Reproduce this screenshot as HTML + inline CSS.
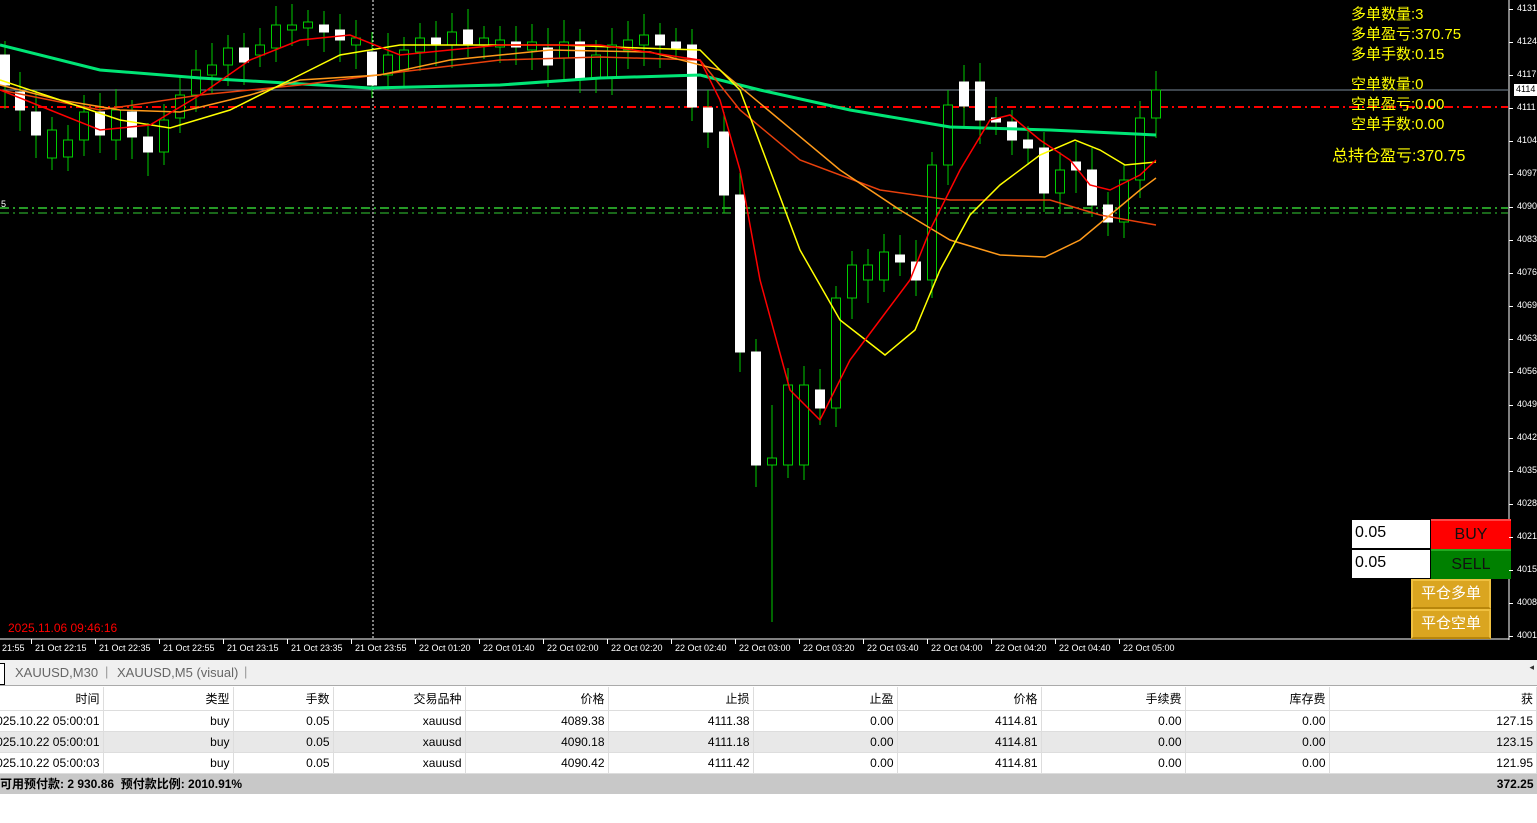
<!DOCTYPE html>
<html><head><meta charset="utf-8"><style>
*{margin:0;padding:0;box-sizing:border-box}
body{width:1537px;height:823px;background:#fff;position:relative;overflow:hidden;font-family:"Liberation Sans","Noto Sans CJK SC",sans-serif}
.chart{position:absolute;left:0;top:0;width:1537px;height:660px;background:#000}
.ax{position:absolute;left:1517px;font-size:9px;color:#fff;font-family:"Liberation Sans",sans-serif}
.info{position:absolute;color:#ff0;font-size:15px;font-family:"Liberation Sans","WenQuanYi Zen Hei",sans-serif}
.tabs{position:absolute;top:660px;left:0;width:1537px;height:26px;background:#f0f0f0;border-bottom:1px solid #aaa;font-size:13px;color:#666}
table{position:absolute;top:687px;left:0;border-collapse:collapse;font-size:12px;width:1537px;table-layout:fixed}
td{height:21px;text-align:right;padding-right:3px;border-right:1px solid #ddd;border-bottom:1px solid #ddd;white-space:nowrap;color:#000;overflow:hidden}
tr.h td{height:23px}
tr.g td{background:#e8e8e8}
tr.f td{background:#c8c8c8;font-weight:bold;border:none;height:21px;overflow:visible}
.dt{direction:rtl;overflow:hidden;white-space:nowrap}
.dt span{direction:ltr;unicode-bidi:embed}
</style></head><body>
<div class="chart">
<svg width="1537" height="660" style="position:absolute;left:0;top:0">
<line x1="0" y1="90" x2="1508" y2="90" stroke="#7a8a9a" stroke-width="1"/>
<line x1="0" y1="107" x2="1508" y2="107" stroke="#f00" stroke-width="2" stroke-dasharray="9,4,2,4"/>
<line x1="0" y1="208" x2="1508" y2="208" stroke="#3c3" stroke-width="1.5" stroke-dasharray="9,4,2,4"/>
<line x1="0" y1="213" x2="1508" y2="213" stroke="#3c3" stroke-width="1" stroke-dasharray="9,4,2,4"/>
<line x1="373" y1="0" x2="373" y2="638" stroke="#fff" stroke-width="1" stroke-dasharray="2,2"/>
<line x1="1509" y1="0" x2="1509" y2="640" stroke="#fff"/>
<line x1="0" y1="639" x2="1509" y2="639" stroke="#fff"/>
<g id="c" stroke-width="1"></g>
<polyline fill="none" stroke="#00e676" stroke-width="3" points="0,45 100,70 200,78 370,88 500,85 600,78 700,75 760,90 850,110 950,127 1050,130 1156,135"/>
<polyline fill="none" stroke="#e8400c" stroke-width="1.5" points="0,90 100,110 200,95 300,85 400,72 500,60 600,57 700,60 740,110 800,160 880,190 950,200 1050,200 1100,215 1156,225"/>
<polyline fill="none" stroke="#ff9a1a" stroke-width="1.5" points="0,85 60,100 120,110 180,112 250,95 300,80 380,75 450,60 550,50 650,52 720,70 780,120 840,170 900,210 950,240 1000,255 1045,257 1080,240 1110,215 1140,190 1156,178"/>
<polyline fill="none" stroke="#ffff00" stroke-width="1.5" points="0,80 60,100 120,120 170,128 230,110 290,80 340,55 400,45 470,45 560,45 640,48 700,50 740,90 770,170 800,250 840,320 885,355 915,330 940,270 970,215 1000,185 1040,155 1075,140 1100,150 1125,165 1156,162"/>
<polyline fill="none" stroke="#f00" stroke-width="1.5" points="0,90 50,110 100,130 150,125 200,95 250,60 300,40 350,35 400,55 500,45 600,45 700,60 720,100 740,170 760,280 790,390 820,420 850,360 880,320 910,280 930,230 960,170 990,120 1010,115 1040,140 1070,160 1090,185 1110,190 1140,175 1156,160"/>
<text x="1" y="207" fill="#fff" font-size="9" font-family="Liberation Sans">5</text>
</svg>
<div class="info" style="left:1351px;top:3px">多单数量:3</div>
<div class="info" style="left:1351px;top:23px">多单盈亏:370.75</div>
<div class="info" style="left:1351px;top:43px">多单手数:0.15</div>
<div class="info" style="left:1351px;top:73px">空单数量:0</div>
<div class="info" style="left:1351px;top:93px">空单盈亏:0.00</div>
<div class="info" style="left:1351px;top:113px">空单手数:0.00</div>
<div class="info" style="left:1332px;top:142px;font-size:16px">总持仓盈亏:370.75</div>
<div style="position:absolute;left:8px;top:621px;color:#f00;font-size:12px">2025.11.06 09:46:16</div>
<div style="position:absolute;left:1352px;top:520px;width:78px;height:28px;background:#fff;font-size:16px;padding:4px 3px;color:#000">0.05</div>
<div style="position:absolute;left:1352px;top:550px;width:78px;height:28px;background:#fff;font-size:16px;padding:4px 3px;color:#000">0.05</div>
<div style="position:absolute;left:1431px;top:519px;width:80px;height:30px;background:#f00;border-top:2px solid #f44;font-size:16px;text-align:center;line-height:28px;color:#111">BUY</div>
<div style="position:absolute;left:1431px;top:549px;width:80px;height:30px;background:#008000;border-top:2px solid #2a2;font-size:16px;text-align:center;line-height:28px;color:#111">SELL</div>
<div style="position:absolute;left:1411px;top:579px;width:80px;height:30px;background:#daa520;border:2px solid #f0c040;border-bottom-color:#b8860b;font-size:15px;text-align:center;line-height:26px;color:#fff">平仓多单</div>
<div style="position:absolute;left:1411px;top:609px;width:80px;height:30px;background:#daa520;border:2px solid #f0c040;border-bottom-color:#b8860b;font-size:15px;text-align:center;line-height:26px;color:#fff">平仓空单</div>
<div id="ax"></div>
<div id="tx" style="position:absolute;top:643px;left:0;width:1509px;height:14px;font-size:9px;color:#fff"></div>
</div>
<div class="tabs"><div style="position:absolute;left:0;top:3px;width:5px;height:22px;border:1px solid #000;border-left:none;background:#fff"></div><span style="position:absolute;left:15px;top:5px">XAUUSD,M30</span><span style="position:absolute;left:105px;top:4px;color:#999">|</span><span style="position:absolute;left:117px;top:5px">XAUUSD,M5 (visual)</span><span style="position:absolute;left:244px;top:4px;color:#999">|</span><span style="position:absolute;right:3px;top:2px;font-size:9px;color:#333">◂</span></div>
<table>
<colgroup><col style="width:103px"><col style="width:130px"><col style="width:100px"><col style="width:132px"><col style="width:143px"><col style="width:145px"><col style="width:144px"><col style="width:144px"><col style="width:144px"><col style="width:144px"><col></colgroup>
<tr class="h"><td>时间</td><td>类型</td><td>手数</td><td>交易品种</td><td>价格</td><td>止损</td><td>止盈</td><td>价格</td><td>手续费</td><td>库存费</td><td>获</td></tr>
<tr><td><div class="dt"><span>2025.10.22 05:00:01</span></div></td><td>buy</td><td>0.05</td><td>xauusd</td><td>4089.38</td><td>4111.38</td><td>0.00</td><td>4114.81</td><td>0.00</td><td>0.00</td><td>127.15</td></tr>
<tr class="g"><td><div class="dt"><span>2025.10.22 05:00:01</span></div></td><td>buy</td><td>0.05</td><td>xauusd</td><td>4090.18</td><td>4111.18</td><td>0.00</td><td>4114.81</td><td>0.00</td><td>0.00</td><td>123.15</td></tr>
<tr><td><div class="dt"><span>2025.10.22 05:00:03</span></div></td><td>buy</td><td>0.05</td><td>xauusd</td><td>4090.42</td><td>4111.42</td><td>0.00</td><td>4114.81</td><td>0.00</td><td>0.00</td><td>121.95</td></tr>
<tr class="f"><td colspan="10" style="text-align:left;padding-left:0">可用预付款: 2 930.86&nbsp; 预付款比例: 2010.91%</td><td>372.25</td></tr>
</table>
<script>
var C=[[5,55,85,1],[20,92,110,1],[36,112,135,1],[52,130,158,0],[68,140,157,0],[84,112,140,0],[100,112,135,1],[116,110,140,0],[132,112,137,1],[148,137,152,1],[164,120,152,0],[180,95,118,0],[196,70,95,0],[212,65,75,0],[228,48,65,0],[244,48,62,1],[260,45,55,0],[276,25,48,0],[292,25,30,0],[308,22,28,0],[324,25,32,1],[340,30,40,1],[356,38,45,0],[372,52,85,1],[388,55,75,0],[404,50,70,0],[420,38,52,0],[436,38,45,1],[452,32,45,0],[468,30,45,1],[484,38,45,0],[500,40,47,0],[516,42,47,1],[532,42,50,0],[548,48,65,1],[564,42,58,0],[580,42,80,1],[596,55,78,0],[612,45,78,0],[628,40,50,0],[644,35,45,0],[660,35,45,1],[676,42,48,1],[692,45,107,1],[708,108,132,1],[724,132,195,1],[740,195,352,1],[756,352,465,1],[772,458,465,0,405,622],[788,385,465,0],[804,385,465,0],[820,390,408,1],[836,298,408,0],[852,265,298,0],[868,265,280,0],[884,252,280,0],[900,255,262,1],[916,262,280,1],[932,165,280,0],[948,105,165,0],[964,82,106,1],[980,82,120,1],[996,118,122,1],[1012,122,140,1],[1028,140,148,1],[1044,148,193,1],[1060,170,193,0],[1076,162,170,1],[1092,170,205,1],[1108,205,222,1],[1124,180,222,0],[1140,118,180,0],[1156,90,118,0]];
var s='';C.forEach(function(c){var hi=c[4]||c[1]-12-(c[0]*7%11),lo=c[5]||c[2]+12+(c[0]*5%13);s+='<line x1="'+c[0]+'" y1="'+hi+'" x2="'+c[0]+'" y2="'+lo+'" stroke="#0c0"/>';s+='<rect x="'+(c[0]-4.5)+'" y="'+c[1]+'" width="9" height="'+Math.max(2,c[2]-c[1])+'" fill="'+(c[3]?'#fff':'#000')+'" stroke="'+(c[3]?'#fff':'#0c0')+'"/>';});
document.getElementById('c').innerHTML=s;
var A=[[4131,9],[4124,42],[4117,75],[4111,108],[4104,141],[4097,174],[4090,207],[4083,240],[4076,273],[4069,306],[4063,339],[4056,372],[4049,405],[4042,438],[4035,471],[4028,504],[4021,537],[4015,570],[4008,603],[4001,636]],h='';
A.forEach(function(a){h+='<div class="ax" style="top:'+(a[1]-6)+'px">'+a[0]+'</div><div style="position:absolute;left:1509px;top:'+a[1]+'px;width:4px;height:1px;background:#fff"></div>';});
h+='<div style="position:absolute;left:1514px;top:84px;width:23px;height:12px;background:#fff;color:#000;font-size:9px;padding-left:2px">4114</div>';
document.getElementById('ax').innerHTML=h;
var T=['21:55','21 Oct 22:15','21 Oct 22:35','21 Oct 22:55','21 Oct 23:15','21 Oct 23:35','21 Oct 23:55','22 Oct 01:20','22 Oct 01:40','22 Oct 02:00','22 Oct 02:20','22 Oct 02:40','22 Oct 03:00','22 Oct 03:20','22 Oct 03:40','22 Oct 04:00','22 Oct 04:20','22 Oct 04:40','22 Oct 05:00'],t='';
T.forEach(function(x,i){var l=i==0?2:35+(i-1)*64;t+='<span style="position:absolute;left:'+l+'px">'+x+'</span>'+(i?'<span style="position:absolute;left:'+(l-4)+'px;top:-4px;width:1px;height:5px;background:#fff"></span>':'');});
document.getElementById('tx').innerHTML=t;
</script>
</body></html>
